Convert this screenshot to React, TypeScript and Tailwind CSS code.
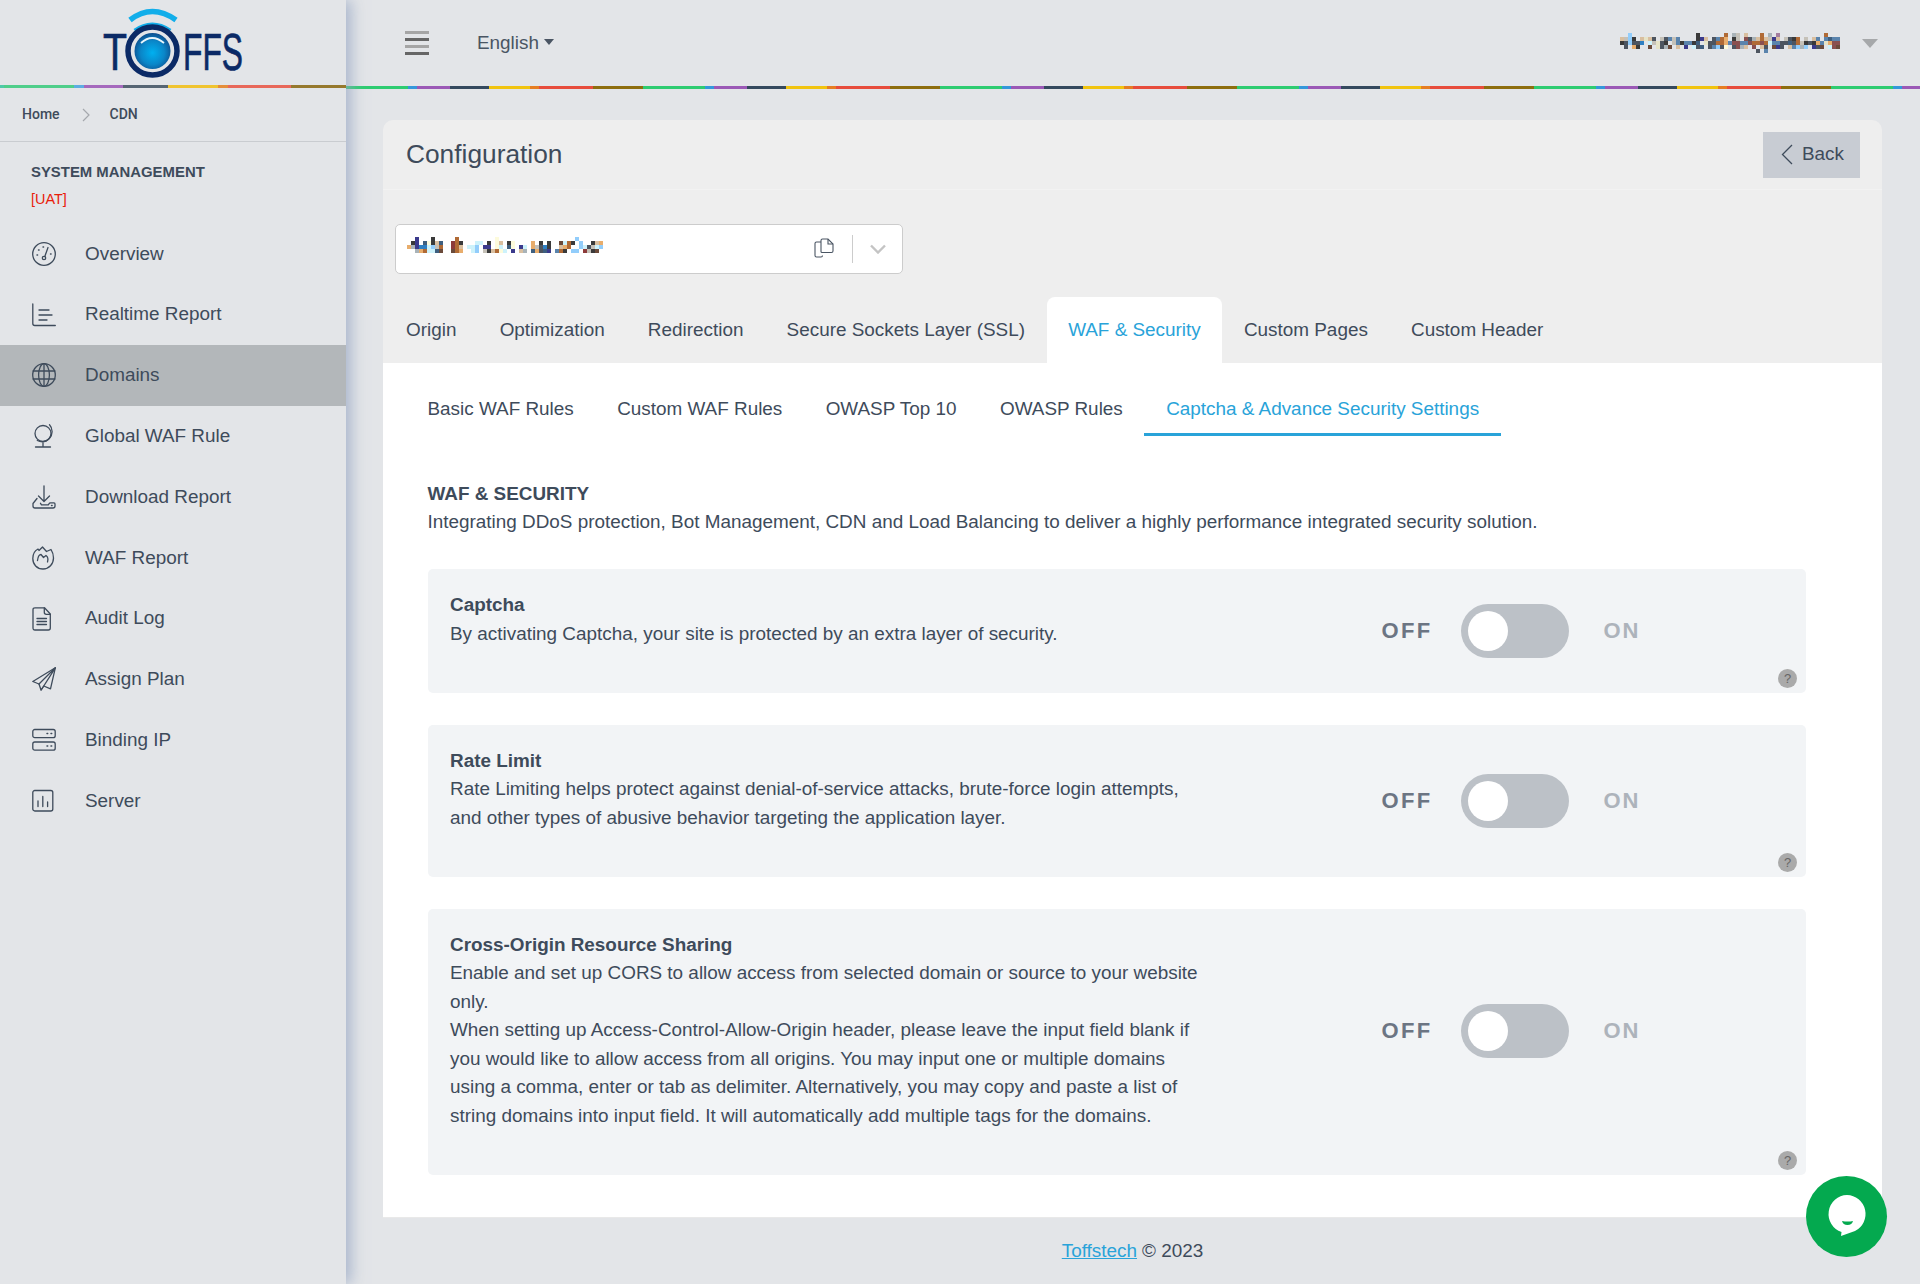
import type { ReactNode } from 'react';

const palette: Record<string, string> = {
  n: '#3b3a8c', d: '#3a3a3a', b: '#b06a35', r: '#8c3a3a', t: '#d9bfa0', o: '#e8ad6c', s: '#3e5f7f',
  c: '#cdf2fb', l: '#92cdfb', y: '#fdfbdc', g: '#c5c1b8', k: '#4d5560', m: '#2f7fc2', w: '#6b4a3a',
  a: '#a9b3b8', e: '#e6e4c8', p: '#5a84ad', i: '#a47e9e', x: '#8a5050',
};

const domainRows = [
  '..n...d.....b.........y...................l......',
  '.dn.sydts..rbd...cc.d.yt.dy....o.d.d..wcbd.l..dto',
  'oanmmclgb..rbt.ccl.nn.yc.sy.nc.ogkmd..tob..lckgcl',
  '..aobccsw..wbo..cl.gdtbyc.n.ta.soksn.pbd.ll.rgdw.',
];

const emailRows = [
  '..l................d......b.ag.t...b.a.i...........b...',
  'tgld.tetk.gkpgp....dnt.kpbo.dg.xkatbtgnt.gkdb.g.tp.pspp',
  'dklkkm.cgekd.gpdppds.ekkbbopxxppxbbxbcppkkskbgdkdopeoxx',
  '.k.od..w.ekaw.t.n.cks.kplky.kxat.x.tk.wnk.tplal.nkw.cxw',
  '..................................k.p..................',
];

function Mosaic({ rows, className }: { rows: string[]; className: string }) {
  const width = rows[0].length * 4;
  const height = rows.length * 4;
  return (
    <svg className={className} width={width} height={height} viewBox={`0 0 ${width} ${height}`} shapeRendering="crispEdges">
      {rows.map((row, y) =>
        row.split('').map((cell, x) =>
          palette[cell] ? <rect key={`${x}-${y}`} x={x * 4} y={y * 4} width="4" height="4" fill={palette[cell]} /> : null
        )
      )}
    </svg>
  );
}

function Icon({ children }: { children: ReactNode }) {
  return (
    <svg width="24" height="24" viewBox="0 0 24 24" fill="none" stroke="#3e4b5b" strokeWidth="1.3" strokeLinecap="round" strokeLinejoin="round" className="shrink-0">
      {children}
    </svg>
  );
}

const navItems: { label: string; active?: boolean; icon: ReactNode }[] = [
  {
    label: 'Overview',
    icon: (
      <>
        <circle cx="12" cy="12" r="11.3" />
        <circle cx="12" cy="16" r="1.7" />
        <path d="M12.8 14.5L16 5.5" />
        <path d="M5 13h.6M6.5 8h.6M11 5h.6M18.5 12h.6" strokeWidth="1.4" />
      </>
    ),
  },
  {
    label: 'Realtime Report',
    icon: (
      <>
        <path d="M.8 1v19.5q0 2 2 2h20.5" />
        <path d="M7 7h10M7 12h13M7 17h8" />
      </>
    ),
  },
  {
    label: 'Domains',
    active: true,
    icon: (
      <>
        <circle cx="12" cy="12" r="11.3" />
        <ellipse cx="12" cy="12" rx="5.4" ry="11.3" />
        <path d="M12 .7v22.6M1 8h22M1 16h22" />
      </>
    ),
  },
  {
    label: 'Global WAF Rule',
    icon: (
      <>
        <circle cx="11" cy="9.5" r="8" />
        <path d="M17.5 .8c3.6 3.8 3.4 10-.2 13.7-3.2 3.3-8 4-12 2" />
        <path d="M11 19v3.5M3.5 23h15" />
      </>
    ),
  },
  {
    label: 'Download Report',
    icon: (
      <>
        <path d="M12 .8v15.5M6.5 11l5.5 5.5 5.5-5.5" />
        <path d="M5 13.5l-4 5v2.5q0 2 2 2h18q2 0 2-2v-2q0-1.2-1-1.2h-3.5q-1 0-1.5 1l-.5 1h-7l-1-1.5" />
        <path d="M19.5 20.5h.6" strokeWidth="1.4" />
      </>
    ),
  },
  {
    label: 'WAF Report',
    icon: (
      <>
        <path d="M10.5 1l4 4.5 4.5-2c2 3 2.5 6 2.5 8.5 0 6-4.5 11-10.5 11S.8 18.5.8 12.5C.8 8 3 4.5 6 3l1 1.5z" />
        <path d="M5.5 14.5c.5-4 2-6 3.5-6l2.5 3 2.5-2c1.5 1 2.5 3 1.5 6.5" />
      </>
    ),
  },
  {
    label: 'Audit Log',
    icon: (
      <>
        <path d="M3 .8h9.500l5.800 6.200v14q0 2-2 2H3q-2 0-2-2V2.800q0-2 2-2z" />
        <path d="M12.3 .8v4.5q0 2 2 2h4M5 11.5h9.5M5 14.5h9.5M5 17.5h9.5" />
      </>
    ),
  },
  {
    label: 'Assign Plan',
    icon: (
      <>
        <path d="M23.3 .8L.8 14.5l6.2 2.5 2 6 2.8-4 6.7 2.8z" />
        <path d="M23.3 .8L7 17M23.3 .8L9.2 23" />
      </>
    ),
  },
  {
    label: 'Binding IP',
    icon: (
      <>
        <rect x=".8" y="1.5" width="22.4" height="8.2" rx="2" />
        <rect x=".8" y="14" width="22.4" height="8.2" rx="2" />
        <path d="M15 5.6h.7M19 5.6h.7M15 18.1h.7M19 18.1h.7" strokeWidth="1.5" />
      </>
    ),
  },
  {
    label: 'Server',
    icon: (
      <>
        <rect x=".8" y="1.5" width="20" height="20.5" rx="2" />
        <path d="M6 12v5.5M10.8 7.5v10M15.6 13v4.5" />
      </>
    ),
  },
];

const mainTabs = ['Origin', 'Optimization', 'Redirection', 'Secure Sockets Layer (SSL)', 'WAF & Security', 'Custom Pages', 'Custom Header'];
const subTabs = ['Basic WAF Rules', 'Custom WAF Rules', 'OWASP Top 10', 'OWASP Rules', 'Captcha & Advance Security Settings'];

function Logo() {
  return (
    <svg width="200" height="79" viewBox="0 0 200 79" className="mt-[6px] ml-[102px]">
      <defs>
        <radialGradient id="lens" cx="50%" cy="55%" r="55%">
          <stop offset="0%" stopColor="#00b0f0" />
          <stop offset="60%" stopColor="#0a86c8" />
          <stop offset="100%" stopColor="#0d4f8f" />
        </radialGradient>
      </defs>
      <text x="1" y="64" fontFamily="'Liberation Sans', sans-serif" fontSize="51" fill="#0b2a66" stroke="#0b2a66" strokeWidth="0.7" textLength="24" lengthAdjust="spacingAndGlyphs">T</text>
      <text x="81" y="64" fontFamily="'Liberation Sans', sans-serif" fontSize="51" fill="#0b2a66" stroke="#0b2a66" strokeWidth="0.7" textLength="60" lengthAdjust="spacingAndGlyphs">FFS</text>
      <path d="M28 14Q50 -3 74 14" fill="none" stroke="#12aeea" strokeWidth="5.5" />
      <path d="M33 25Q50 13 68 25" fill="none" stroke="#12aeea" strokeWidth="5" />
      <ellipse cx="50.5" cy="45" rx="24.5" ry="24" fill="none" stroke="#0b2a66" strokeWidth="5.5" />
      <circle cx="50.5" cy="45" r="18" fill="url(#lens)" />
      <path d="M39 37Q50 27 62 37" fill="none" stroke="#e8f6fc" strokeWidth="1.8" />
    </svg>
  );
}

function PolicyCard({ title, toggleClass, children }: { title: string; toggleClass?: string; children: ReactNode }) {
  return (
    <div className="relative flex items-center rounded-[5px] bg-[#f2f4f6] pl-[22.5px]">
      <div className="w-[760px] pt-[22px] pb-[45px]">
        <div className="font-bold">{title}</div>
        <div>{children}</div>
      </div>
      <div className={`ml-[171.5px] flex items-center ${toggleClass ?? ''}`}>
        <span className="w-[79px] text-[22px] leading-none font-bold tracking-[2.4px] text-[#6c7583]">OFF</span>
        <span className="flex h-[54px] w-[108px] items-center rounded-full bg-[#bcc1c7] pl-[7px]">
          <span className="h-[40px] w-[40px] rounded-full bg-white" />
        </span>
        <span className="ml-[35px] text-[22px] leading-none font-bold tracking-[2px] text-[#adb3bb]">ON</span>
      </div>
      <span className="absolute right-[9px] bottom-[5px] flex h-[19px] w-[19px] items-center justify-center rounded-full bg-[#aaaaaa] text-[13px] leading-none text-[#666666]">?</span>
    </div>
  );
}

export default function App() {
  return (
    <div className="relative flex h-[1284px] w-[1920px] overflow-hidden bg-[#e3e5e8] font-['Liberation_Sans',Arial,sans-serif] text-[18.9px] leading-[28.5px] text-[#3e4b5b]">
      <aside className="z-10 flex h-full w-[346px] shrink-0 flex-col bg-[#e3e5e8] shadow-[5px_0_14px_rgba(150,165,195,0.75)]">
        <div className="h-[85px] overflow-hidden">
          <Logo />
        </div>
        <div className="h-[3px] bg-[linear-gradient(90deg,#4fc9a8_0,#4fc9a8_4px,#4fce8a_4px,#4fce8a_74px,#5dade2_74px,#5dade2_84px,#a569bd_84px,#a569bd_123px,#566573_123px,#566573_168px,#f0c430_168px,#f0c430_218px,#e58e3a_218px,#e58e3a_228px,#e8685a_228px,#e8685a_291px,#96792d_291px,#96792d_346px)]" />
        <div className="flex h-[54px] items-center border-b border-[#c9ccd0] pl-[22px] font-['Roboto',sans-serif] text-[14px] font-medium">
          <span>Home</span>
          <svg width="8" height="14" viewBox="0 0 8 14" fill="none" stroke="#a5a8ad" strokeWidth="1.2" className="mr-[20px] ml-[22px]">
            <path d="M1 1l6 6-6 6" />
          </svg>
          <span>CDN</span>
        </div>
        <div className="pt-[17px] pl-[31px] text-[14.9px] leading-[27px] font-bold">
          <div>SYSTEM MANAGEMENT</div>
          <div className="text-[14.4px] font-normal text-[#e8200a]">[UAT]</div>
        </div>
        <nav className="mt-[10.5px]">
          {navItems.map((item) => (
            <a key={item.label} className={`flex h-[60.8px] items-center gap-[29px] pl-[32px] ${item.active ? 'bg-[#b3b7ba]' : ''}`}>
              <Icon>{item.icon}</Icon>
              <span>{item.label}</span>
            </a>
          ))}
        </nav>
      </aside>

      <div className="flex min-w-0 flex-1 flex-col">
        <header className="flex h-[86px] shrink-0 items-center">
          <span className="ml-[59px] flex h-[24px] w-[24px] flex-col justify-between">
            <span className="h-[3px] bg-[#a5a5a5]" />
            <span className="h-[3px] bg-[#666666]" />
            <span className="h-[3px] bg-[#a5a5a5]" />
            <span className="h-[3px] bg-[#666666]" />
          </span>
          <span className="ml-[48px] flex items-center text-[#4a5563]">
            English
            <span className="mt-[-2px] ml-[5px] h-0 w-0 border-x-[5px] border-t-[6px] border-x-transparent border-t-[#4a5563]" />
          </span>
          <Mosaic rows={emailRows} className="ml-auto" />
          <span className="mr-[42px] ml-[22px] h-0 w-0 border-x-[8px] border-t-[9px] border-x-transparent border-t-[#a6a8aa]" />
        </header>
        <div className="h-[3px] shrink-0 bg-[repeating-linear-gradient(90deg,#2ecc71_0,#2ecc71_62px,#3498db_62px,#3498db_71px,#9b59b6_71px,#9b59b6_104px,#34495e_104px,#34495e_143px,#f1c40f_143px,#f1c40f_184px,#e67e22_184px,#e67e22_193px,#e74c3c_193px,#e74c3c_247px,#8e6e0e_247px,#8e6e0e_297px)]" />

        <main className="flex flex-1 flex-col pt-[31px] pr-[38px] pl-[37px]">
          <section className="rounded-t-[10px] bg-[#eeeeee]">
            <div className="flex h-[70px] items-center justify-between border-b border-[#f2f2f2] pr-[22px] pl-[23px]">
              <h1 className="text-[26.3px] leading-none font-normal">Configuration</h1>
              <button className="flex h-[46px] w-[97px] items-center bg-[#c8ccd3] pl-[18px]">
                <svg width="12" height="21" viewBox="0 0 12 21" fill="none" stroke="#3e4b5b" strokeWidth="1.3">
                  <path d="M11 1L1.5 10.5 11 20" />
                </svg>
                <span className="ml-[9px]">Back</span>
              </button>
            </div>
            <div className="mt-[34px] ml-[12px] flex h-[50px] w-[508px] items-center rounded-[5px] border border-[#cccccc] bg-white pr-[16px] pl-[11px]">
              <Mosaic rows={domainRows} className="mt-[-8px]" />
              <svg width="20" height="20" viewBox="0 0 20 20" fill="none" stroke="#4a5563" strokeWidth="1.1" className="mt-[-2px] mr-[18px] ml-auto">
                <path d="M7 4H2.5q-1.5 0-1.5 1.5V17.5q0 1.5 1.5 1.5H7q1.5 0 1.5-1.5" />
                <path d="M8 14.5q-1 0-1-1V2.5q0-1.5 1.5-1.5H14l5 5v7q0 1.5-1.5 1.5z" />
                <path d="M14 1v5h5" />
              </svg>
              <span className="mr-[17px] h-[28px] w-px bg-[#cccccc]" />
              <svg width="16" height="10" viewBox="0 0 16 10" fill="none" stroke="#c4c4c4" strokeWidth="2.4">
                <path d="M1 1.5l7 7 7-7" />
              </svg>
            </div>
            <div className="mt-[23px] flex h-[66px] pl-[1.5px]">
              {mainTabs.map((tab) => (
                <div key={tab} className={`flex items-center px-[21.6px] ${tab === 'WAF & Security' ? 'rounded-t-[8px] bg-white text-[#29a3d9]' : ''}`}>
                  {tab}
                </div>
              ))}
            </div>
          </section>

          <section className="h-[855px] border-b border-[#e9e9e9] bg-white pr-[76px] pl-[44.5px]">
            <div className="flex pt-[22px]">
              {subTabs.map((tab, i) => (
                <div
                  key={tab}
                  className={`flex h-[51px] items-center border-b-[3px] px-[21.7px] ${i === 0 ? '-ml-[21.7px]' : ''} ${tab.startsWith('Captcha') ? 'border-[#29a3d9] text-[#29a3d9]' : 'border-transparent'}`}
                >
                  {tab}
                </div>
              ))}
            </div>
            <div className="mt-[44px] h-[27.5px] font-bold">WAF &amp; SECURITY</div>
            <p>Integrating DDoS protection, Bot Management, CDN and Load Balancing to deliver a highly performance integrated security solution.</p>
            <div className="mt-[33px] flex flex-col gap-[31.5px]">
              <PolicyCard title="Captcha">By activating Captcha, your site is protected by an extra layer of security.</PolicyCard>
              <PolicyCard title="Rate Limit">
                Rate Limiting helps protect against denial-of-service attacks, brute-force login attempts, and other types of abusive behavior targeting the application layer.
              </PolicyCard>
              <PolicyCard title="Cross-Origin Resource Sharing" toggleClass="-mt-[22px]">
                Enable and set up CORS to allow access from selected domain or source to your website only.
                <br />
                When setting up Access-Control-Allow-Origin header, please leave the input field blank if you would like to allow access from all origins. You may input one or multiple domains using a comma, enter or tab as delimiter. Alternatively, you may copy and paste a list of string domains into input field. It will automatically add multiple tags for the domains.
              </PolicyCard>
            </div>
          </section>

          <footer className="flex h-[66px] items-center justify-center gap-[5px]">
            <a className="text-[#29a3d9] underline">Toffstech</a>
            <span>© 2023</span>
          </footer>
        </main>
      </div>

      <span className="absolute right-[33px] bottom-[27px] flex h-[81px] w-[81px] items-center justify-center rounded-full bg-[#04a94f]">
        <svg width="44" height="50" viewBox="0 0 44 50">
          <path d="M22 3a19 19 0 0 1 8 36l-14 5 .5-4A19 19 0 0 1 22 3z" fill="#ffffff" />
          <path d="M17 29q6 1 11 0q-1 4-5.5 4T17 29z" fill="#04a94f" />
        </svg>
      </span>
    </div>
  );
}
